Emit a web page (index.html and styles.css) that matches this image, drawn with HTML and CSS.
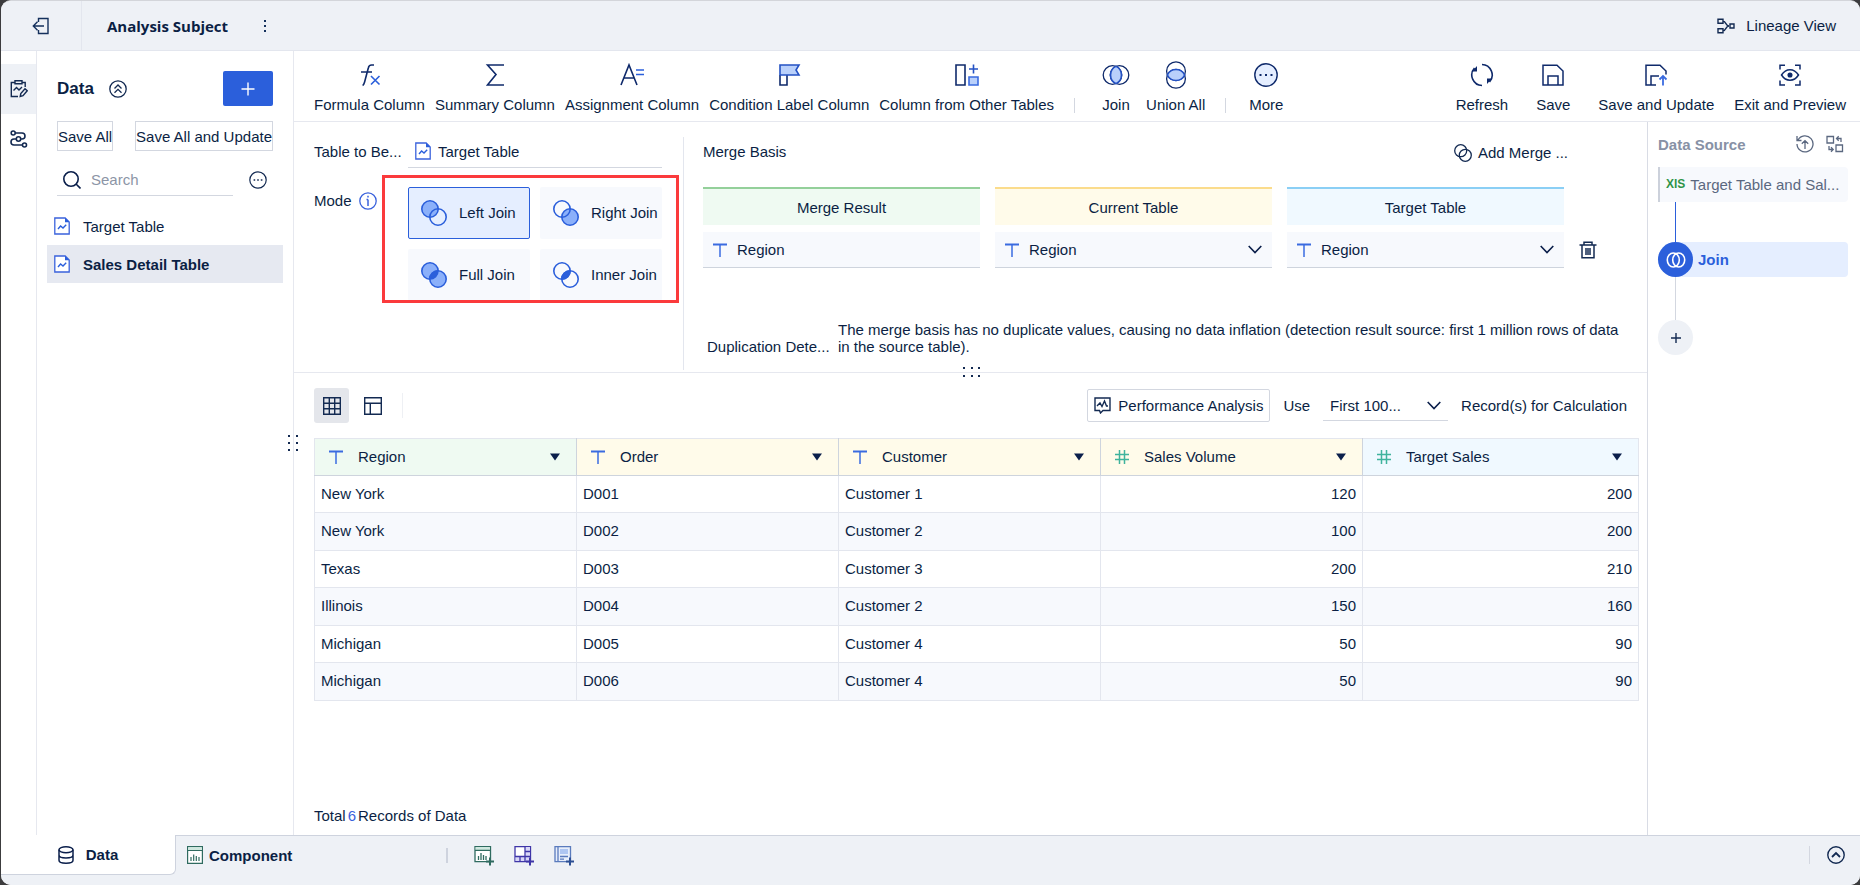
FILE: index.html
```html
<!DOCTYPE html>
<html lang="en">
<head>
    <meta charset="UTF-8">
    <meta name="viewport" content="width=device-width, initial-scale=1.0">
    <title>Analysis Subject</title>
    <link rel="stylesheet" href="styles.css">
</head>
<body>

<!-- Shared icons -->
<svg class="sprite" aria-hidden="true">
    <symbol id="icon-sheet" viewBox="0 0 16 18">
        <path d="M.8 1h10.4L15.2 5v12H.8z" fill="#fff" stroke="#3a62dc" stroke-width="1.3"/>
        <path d="M11 1v4.2h4.2z" fill="#2b5fdb"/>
        <path d="M4 12l2.6-3 2.4 2 3.2-3.2" fill="none" stroke="#2b5fdb" stroke-width="1.4"/>
    </symbol>
    <symbol id="icon-text" viewBox="0 0 14 14">
        <path d="M0 1.5h14" stroke="#3a6be0" stroke-width="2"/>
        <path d="M7 1.5V14" stroke="#3a6be0" stroke-width="1.5"/>
    </symbol>
    <symbol id="icon-number" viewBox="0 0 14 14">
        <path d="M4.5 0v14M9.5 0v14M0 4.5h14M0 9.5h14" stroke="#3fb39d" stroke-width="1.5"/>
    </symbol>
    <symbol id="icon-arrow" viewBox="0 0 10 8">
        <path d="M0 .5h10L5 7.5z" fill="#0b1f4b"/>
    </symbol>
    <symbol id="icon-more" viewBox="0 0 18 18">
        <circle cx="9" cy="9" r="8.2" fill="none" stroke="#132a52" stroke-width="1.2"/>
        <path d="M4.6 9h1.6M8.2 9h1.6M11.8 9h1.6" stroke="#132a52" stroke-width="1.6"/>
    </symbol>
</svg>

<div class="app">

    <!-- Header -->
    <header class="header">
        <button class="back" aria-label="Back">
            <svg width="18" height="18" viewBox="0 0 18 18" fill="none" stroke="#14305c" stroke-width="1.4"><path d="M6.5 5V1.5h9.5v15H6.5V13M12 9H1.5M5.5 4.8L1.3 9l4.2 4.2"/></svg>
        </button>
        <h1 class="title">Analysis Subject</h1>
        <button class="dots" aria-label="Subject menu">
            <svg width="4" height="12" viewBox="0 0 4 12" fill="#14305c"><path d="M1 0h2v2H1zM1 5h2v2H1zM1 10h2v2H1z"/></svg>
        </button>
        <button class="lineage">
            <svg width="18" height="16" viewBox="0 0 18 16" fill="none" stroke="#132a52" stroke-width="1.4"><path d="M1 1.2h5v4H1zM1 10.8h5v4H1zM13 6h4v4h-4zM6 3c3 0 2.5 5 6 5M6 13c3 0 2.5-5 6-5"/></svg>
            Lineage View
        </button>
    </header>

    <div class="body">

        <!-- Left rail -->
        <nav class="rail">
            <button class="rail-item active" aria-label="Edit">
                <svg width="18" height="18" viewBox="0 0 18 18" fill="none" stroke="#132a52" stroke-width="1.4"><path d="M5 2.5H1.3v14H8M12 2.5h3.2V7M5 .8h7v3H5zM3.5 10.5l3-3 2.5 2.5 3-3M10.2 16.500l.6-3 4.200-4.700 2.200 2-4.200 4.800z"/></svg>
            </button>
            <button class="rail-item" aria-label="Lineage">
                <svg width="18" height="18" viewBox="0 0 18 18" fill="none" stroke="#132a52" stroke-width="1.6"><circle cx="3.2" cy="3" r="2"/><circle cx="8.5" cy="9" r="2.2"/><circle cx="14.5" cy="15" r="2"/><path d="M5.2 3H12a3 3 0 0 1 0 6h-1.3M6.300 9H4a3 3 0 0 0 0 6h8.500"/></svg>
            </button>
        </nav>

        <!-- Data list -->
        <aside class="tables">
            <div class="tables-head">
                <h2>Data</h2>
                <button aria-label="Collapse">
                    <svg width="18" height="18" viewBox="0 0 18 18" fill="none" stroke="#132a52" stroke-width="1.3"><circle cx="9" cy="9" r="8.2"/><path d="M5.5 8.5L9 5l3.5 3.5M5.5 12.8L9 9.3l3.5 3.5"/></svg>
                </button>
                <button class="add" aria-label="Add">
                    <svg width="14" height="14" viewBox="0 0 14 14" stroke="#fff" stroke-width="1.4"><path d="M7 .5v13M.5 7h13"/></svg>
                </button>
            </div>
            <div class="tables-save">
                <button class="outline">Save All</button>
                <button class="outline">Save All and Update</button>
            </div>
            <div class="tables-search">
                <label class="search">
                    <svg width="18" height="18" viewBox="0 0 18 18" fill="none" stroke="#0b1f4b" stroke-width="1.6"><circle cx="8" cy="8" r="7.2"/><path d="M13 13l4.5 4.5"/></svg>
                    <input type="text" placeholder="Search" aria-label="Search">
                </label>
                <button aria-label="More options"><svg width="18" height="18"><use href="#icon-more"/></svg></button>
            </div>
            <ul class="table-list">
                <li><svg width="16" height="18"><use href="#icon-sheet"/></svg>Target Table</li>
                <li class="selected"><svg width="16" height="18"><use href="#icon-sheet"/></svg>Sales Detail Table</li>
            </ul>
        </aside>

        <div class="workspace">

            <!-- Toolbar -->
            <div class="toolbar">
                <button class="tool">
                    <svg width="24" height="26" viewBox="0 0 24 26" fill="none" stroke="#0f2a6b" stroke-width="1.6"><path d="M17 3h-2.5c-2 0-2.8 1-3.2 3L7.6 20c-.4 1.5-1 3-2 3.5M4 10h11"/><path d="M14 14l8.500 8.500M22.500 14L14 22.500" stroke="#2b5fdb"/></svg>
                    Formula Column
                </button>
                <button class="tool">
                    <svg width="24" height="26" viewBox="0 0 24 26" fill="none" stroke="#0f2a6b" stroke-width="1.6"><path d="M21 3H4.5l8.5 9.500L4.500 23H21"/></svg>
                    Summary Column
                </button>
                <button class="tool">
                    <svg width="24" height="26" viewBox="0 0 24 26" fill="none" stroke="#0f2a6b" stroke-width="1.6"><path d="M1 23L9 3l8 20M4 16h10.5"/><path d="M16 8h8M16 12.500h8" stroke="#2b5fdb"/></svg>
                    Assignment Column
                </button>
                <button class="tool">
                    <svg width="24" height="26" viewBox="0 0 24 26" fill="#fff" stroke-width="1.6"><path d="M3 13v10h7V13" stroke="#0f2a6b"/><path d="M3 3h19l-3 5 3 5H3z" fill="#b9d0fb" stroke="#2452c4"/></svg>
                    Condition Label Column
                </button>
                <button class="tool">
                    <svg width="24" height="26" viewBox="0 0 24 26" fill="#fff" stroke-width="1.6"><path d="M1 3h9v20H1z" stroke="#0f2a6b"/><path d="M14 15h9v8h-9z" fill="#b9d0fb" stroke="#3a6be0"/><path d="M18.5 2.5v9M14 7h9" stroke="#2452c4"/></svg>
                    Column from Other Tables
                </button>
                <span class="divider"></span>
                <button class="tool join">
                    <svg width="28" height="28" viewBox="0 0 28 28" fill="none" stroke="#0f2a6b" stroke-width="1.3"><circle cx="10.5" cy="14" r="9.3"/><circle cx="17.5" cy="14" r="9.3"/><path d="M14 5.4a9.5 9.5 0 0 1 0 17.2 9.5 9.5 0 0 1 0-17.2z" fill="#b9d0fb" stroke="#2452c4" stroke-width="1.6"/></svg>
                    Join
                </button>
                <button class="tool union">
                    <svg width="28" height="28" viewBox="0 0 28 28" fill="none" stroke="#0f2a6b" stroke-width="1.3"><circle cx="14" cy="10.200" r="9.400"/><circle cx="14" cy="17.800" r="9.400"/><path d="M5.4 14a9.500 9.500 0 0 1 17.200 0 9.500 9.500 0 0 1-17.200 0z" fill="#b9d0fb" stroke="#2452c4" stroke-width="1.6"/></svg>
                    Union All
                </button>
                <span class="divider"></span>
                <button class="tool more">
                    <svg width="26" height="26" viewBox="0 0 26 26"><circle cx="13" cy="13" r="11.2" fill="#e5eeff" stroke="#0f2a6b" stroke-width="1.4"/><path d="M6.5 12h2v2h-2zM12 12h2v2h-2zM17.5 12h2v2h-2z" fill="#0f2a6b"/></svg>
                    More
                </button>
                <div class="toolbar-right">
                    <button class="tool">
                        <svg width="24" height="26" viewBox="0 0 24 26" fill="none" stroke="#0f2a6b" stroke-width="1.6"><path d="M12 2.5a10.5 10.5 0 0 1 7.5 17.500M12 23.500A10.500 10.500 0 0 1 4.500 6"/><path d="M2 9.500L7 4v5.500zM17 16.500h5L17 22z" fill="#0f2a6b" stroke="none"/></svg>
                        Refresh
                    </button>
                    <button class="tool">
                        <svg width="24" height="26" viewBox="0 0 24 26" fill="none" stroke="#0f2a6b" stroke-width="1.5"><path d="M2 3.2h14L22 9v14H2zM7 23v-9h10v9"/></svg>
                        Save
                    </button>
                    <button class="tool">
                        <svg width="24" height="26" viewBox="0 0 24 26" fill="none" stroke="#0f2a6b" stroke-width="1.5"><path d="M12 23H2V3.2h14L22 9v3.500M7 23v-9h8"/><path d="M19 23.500v-9M15.500 17.500L19 14l3.500 3.500" stroke="#3a6be0" stroke-width="1.8"/></svg>
                        Save and Update
                    </button>
                    <button class="tool exit">
                        <svg width="24" height="26" viewBox="0 0 24 26" fill="none" stroke="#0f2a6b" stroke-width="1.5"><path d="M2 7.5V3.2h5M17 3.2h5v4.3M22 18.5V23h-5M7 23H2v-4.500M3.500 13c4.500-7 12.500-7 17 0-4.500 7-12.500 7-17 0z"/><circle cx="12" cy="13" r="1.8" fill="#0f2a6b"/></svg>
                        Exit and Preview
                    </button>
                </div>
            </div>

            <div class="content">
                <main class="main">

                    <!-- Join settings -->
                    <section class="settings">
                        <div class="join-mode">
                            <div class="field">
                                <span class="field-label">Table to Be...</span>
                                <div class="field-value"><svg width="16" height="18"><use href="#icon-sheet"/></svg>Target Table</div>
                            </div>
                            <div class="field modes-field">
                                <span class="field-label mode-label" id="modeLabel">Mode
                                    <svg width="18" height="18" viewBox="0 0 18 18" fill="none" stroke="#3a62dc" stroke-width="1.3"><circle cx="9" cy="9" r="8.2"/><path d="M9 7.5V14M7.5 7.5H9M9 3.8v1.8" stroke-width="1.5"/></svg>
                                </span>
                                <div class="modes" role="radiogroup" aria-labelledby="modeLabel">
                                    <label class="mode">
                                        <input type="radio" name="mode" value="left" checked>
                                        <svg width="26" height="26" viewBox="0 0 26 26" fill="none" stroke="#2b5fdb" stroke-width="1.6"><circle cx="9" cy="9" r="8.2" fill="#8bb0fa"/><circle cx="17" cy="17" r="8.2"/></svg>
                                        Left Join
                                    </label>
                                    <label class="mode">
                                        <input type="radio" name="mode" value="right">
                                        <svg width="26" height="26" viewBox="0 0 26 26" fill="none" stroke="#2b5fdb" stroke-width="1.6"><circle cx="17" cy="17" r="8.2" fill="#8bb0fa"/><circle cx="9" cy="9" r="8.2"/></svg>
                                        Right Join
                                    </label>
                                    <label class="mode">
                                        <input type="radio" name="mode" value="full">
                                        <svg width="26" height="26" viewBox="0 0 26 26" fill="#8bb0fa" stroke="#2b5fdb" stroke-width="1.6"><circle cx="9" cy="9" r="8.2"/><circle cx="17" cy="17" r="8.2"/><path d="M17 8.8a8.2 8.2 0 0 1-8.2 8.2A8.2 8.2 0 0 1 17 8.8z" fill="#2b5fdb"/></svg>
                                        Full Join
                                    </label>
                                    <label class="mode">
                                        <input type="radio" name="mode" value="inner">
                                        <svg width="26" height="26" viewBox="0 0 26 26" fill="none" stroke="#2b5fdb" stroke-width="1.6"><circle cx="9" cy="9" r="8.2"/><circle cx="17" cy="17" r="8.2"/><path d="M17 8.8a8.2 8.2 0 0 1-8.2 8.2A8.2 8.2 0 0 1 17 8.8z" fill="#2b5fdb"/></svg>
                                        Inner Join
                                    </label>
                                    <div class="highlight"></div>
                                </div>
                            </div>
                        </div>

                        <div class="basis">
                            <div class="basis-head">
                                <span>Merge Basis</span>
                                <button class="add-merge">
                                    <svg width="18" height="18" viewBox="0 0 18 18" fill="none" stroke="#132a52" stroke-width="1.3"><circle cx="6.7" cy="6.7" r="6"/><circle cx="11.3" cy="11.3" r="6"/></svg>
                                    Add Merge ...
                                </button>
                            </div>
                            <div class="basis-grid">
                                <div class="basis-title green">Merge Result</div>
                                <div class="basis-title yellow">Current Table</div>
                                <div class="basis-title blue">Target Table</div>
                                <div></div>
                                <div class="basis-field"><svg width="14" height="14"><use href="#icon-text"/></svg>Region</div>
                                <div class="basis-field">
                                    <svg width="14" height="14"><use href="#icon-text"/></svg>
                                    <select class="dropdown" aria-label="Current table field"><option>Region</option></select>
                                </div>
                                <div class="basis-field">
                                    <svg width="14" height="14"><use href="#icon-text"/></svg>
                                    <select class="dropdown" aria-label="Target table field"><option>Region</option></select>
                                </div>
                                <button class="trash" aria-label="Delete">
                                    <svg width="18" height="18" viewBox="0 0 18 18" fill="none" stroke="#132a52" stroke-width="1.5"><path d="M.5 4h17M5 4V1.2h8V4M3 4v12.8h12V4M7 7v7M9 7v7M11 7v7"/></svg>
                                </button>
                            </div>
                            <div class="duplication">
                                <span class="duplication-label">Duplication Dete...</span>
                                <p>The merge basis has no duplicate values, causing no data inflation (detection result source: first 1 million rows of data in the source table).</p>
                            </div>
                        </div>
                        <svg class="drag-x" width="18" height="12" viewBox="0 0 18 12" fill="#132a52"><path d="M0 1h2v2H0zM8 1h2v2H8zM15 1h2v2h-2zM0 9h2v2H0zM8 9h2v2H8zM15 9h2v2h-2z"/></svg>
                    </section>

                    <!-- Preview table -->
                    <section class="preview">
                        <svg class="drag-y" width="12" height="18" viewBox="0 0 12 18" fill="#132a52"><path d="M1 1h2v2H1zM1 8h2v2H1zM1 15h2v2H1zM9 1h2v2H9zM9 8h2v2H9zM9 15h2v2H9z"/></svg>
                        <div class="preview-bar">
                            <button class="view active" aria-label="Table view">
                                <svg width="18" height="18" viewBox="0 0 18 18" fill="none" stroke="#132a52" stroke-width="1.4"><path d="M.7.7h16.6v16.6H.7zM6.3.7v16.6M11.7.7v16.6M.7 6.3h16.6M.7 11.7h16.6"/></svg>
                            </button>
                            <button class="view" aria-label="Layout view">
                                <svg width="18" height="18" viewBox="0 0 18 18" fill="none" stroke="#132a52" stroke-width="1.4"><path d="M.7.7h16.6v16.6H.7zM.7 6.3h16.6M6.3 6.3v11"/></svg>
                            </button>
                            <span class="view-divider"></span>
                            <div class="preview-options">
                                <button class="outline performance">
                                    <svg width="17" height="17" viewBox="0 0 17 17" fill="none" stroke="#132a52" stroke-width="1.4"><path d="M1 1h15v12.5H9L6.5 16l-1-2.5H1zM3 9l3-3 2 3.5L10.5 4l2 5H14"/></svg>
                                    Performance Analysis
                                </button>
                                <label for="records">Use</label>
                                <select class="dropdown records" id="records"><option>First 100...</option></select>
                                <span>Record(s) for Calculation</span>
                            </div>
                        </div>

                        <table class="data">
                            <thead>
                                <tr>
                                    <th class="green"><div class="col"><svg width="14" height="14"><use href="#icon-text"/></svg>Region<svg class="arrow" width="10" height="8"><use href="#icon-arrow"/></svg></div></th>
                                    <th class="yellow"><div class="col"><svg width="14" height="14"><use href="#icon-text"/></svg>Order<svg class="arrow" width="10" height="8"><use href="#icon-arrow"/></svg></div></th>
                                    <th class="yellow"><div class="col"><svg width="14" height="14"><use href="#icon-text"/></svg>Customer<svg class="arrow" width="10" height="8"><use href="#icon-arrow"/></svg></div></th>
                                    <th class="yellow"><div class="col"><svg width="14" height="14"><use href="#icon-number"/></svg>Sales Volume<svg class="arrow" width="10" height="8"><use href="#icon-arrow"/></svg></div></th>
                                    <th class="blue"><div class="col"><svg width="14" height="14"><use href="#icon-number"/></svg>Target Sales<svg class="arrow" width="10" height="8"><use href="#icon-arrow"/></svg></div></th>
                                </tr>
                            </thead>
                            <tbody>
                                <tr><td>New York</td><td>D001</td><td>Customer 1</td><td class="num">120</td><td class="num">200</td></tr>
                                <tr><td>New York</td><td>D002</td><td>Customer 2</td><td class="num">100</td><td class="num">200</td></tr>
                                <tr><td>Texas</td><td>D003</td><td>Customer 3</td><td class="num">200</td><td class="num">210</td></tr>
                                <tr><td>Illinois</td><td>D004</td><td>Customer 2</td><td class="num">150</td><td class="num">160</td></tr>
                                <tr><td>Michigan</td><td>D005</td><td>Customer 4</td><td class="num">50</td><td class="num">90</td></tr>
                                <tr><td>Michigan</td><td>D006</td><td>Customer 4</td><td class="num">50</td><td class="num">90</td></tr>
                            </tbody>
                        </table>

                        <p class="total"><span>Total</span><b>6</b><span>Records of Data</span></p>
                    </section>
                </main>

                <!-- Steps -->
                <aside class="steps">
                    <div class="steps-head">
                        <h3>Data Source</h3>
                        <button aria-label="Restore">
                            <svg width="18" height="18" viewBox="0 0 18 18" fill="none" stroke="#5b6880" stroke-width="1.3"><path d="M2 5a8 8 0 1 1-1 4M1 1v4.5h4.5M9 14V6M5.8 8.8L9 5.6l3.2 3.2"/></svg>
                        </button>
                        <button aria-label="Swap source">
                            <svg width="18" height="18" viewBox="0 0 18 18" fill="none" stroke="#5b6880" stroke-width="1.3"><path d="M1 1.5h6.500v6.500H1zM10 10h6.500v6.500H10zM15 7V3.500h-4M12.700 1.200l-2.200 2.300 2.200 2.300M3 11v3.500h4M5 12.200l2.200 2.300L5 16.800"/></svg>
                        </button>
                    </div>
                    <div class="source"><span class="xls">XlS</span>Target Table and Sal...</div>
                    <span class="line blue-line"></span>
                    <button class="step">
                        <span class="circle"><svg width="20" height="20" viewBox="0 0 20 20" fill="none" stroke="#fff" stroke-width="1.6"><ellipse cx="7.3" cy="10" rx="6" ry="7"/><ellipse cx="12.7" cy="10" rx="6" ry="7"/></svg></span>
                        Join
                    </button>
                    <span class="line"></span>
                    <button class="circle plus" aria-label="Add step">
                        <svg width="10" height="10" viewBox="0 0 10 10" stroke="#132a52" stroke-width="1.4"><path d="M5 0v10M0 5h10"/></svg>
                    </button>
                </aside>
            </div>
        </div>
    </div>

    <!-- Bottom tabs -->
    <footer class="footer">
        <button class="tab active">
            <svg width="16" height="18" viewBox="0 0 16 18" fill="none" stroke="#0b1f4b" stroke-width="1.5"><ellipse cx="8" cy="3.8" rx="7" ry="3"/><path d="M1 3.8v10.4c0 4 14 4 14 0V3.8M1 9c0 4 14 4 14 0"/></svg>
            Data
        </button>
        <button class="tab component">
            <svg width="16" height="18" viewBox="0 0 16 18" fill="none" stroke="#2f6b60" stroke-width="1.2"><path d="M.6.6h14.800v16.800H.6z" fill="#fff"/><path d="M1.200 1.200h13.600v3H1.200z" fill="#cfe8df" stroke="none"/><path d="M.6 4.500h14.800M4 15v-4M6.700 15V8.500M9.300 15v-5M12 15v-4"/></svg>
            Component
        </button>
        <span class="footer-divider"></span>
        <div class="footer-add">
            <button aria-label="Add component">
                <svg width="20" height="22" viewBox="0 0 20 22" fill="none" stroke="#2f6b60" stroke-width="1.3"><path d="M1 2.600h15.500v15H1z" fill="#fff"/><path d="M1.600 3h14.200v3H1.600z" fill="#cfe8df" stroke="none"/><path d="M1 6.300h15.500M4.500 16v-4M7 16V9M9.500 16v-5M12 16v-4"/><path d="M16 13.500v8M12 17.500h8" stroke-width="2"/></svg>
            </button>
            <button aria-label="Add dashboard">
                <svg width="20" height="22" viewBox="0 0 20 22" fill="none" stroke="#3f36a8" stroke-width="1.300"><path d="M1 2.600h15.500v15H1z" fill="#fff"/><path d="M11.500 3h4.500v10h-4.500zM1.600 13H16v4H1.600z" fill="#d9d7f7" stroke="none"/><path d="M11 2.600v15M1 12.500h15.500M11 7.500h5.500M6 12.500v5"/><path d="M16 13.500v8M12 17.500h8" stroke-width="2"/></svg>
            </button>
            <button aria-label="Add report">
                <svg width="20" height="22" viewBox="0 0 20 22" fill="none" stroke="#5a7bbd" stroke-width="1.300"><path d="M1 2.600h15.500v15H1z" fill="#e7eefb"/><path d="M6 5h8v5H6z" fill="#aec6f2" stroke="none"/><path d="M4 2.600v15M6 12.500h8M6 15.200h4"/><path d="M16 13.500v8M12 17.500h8" stroke="#2c4f94" stroke-width="2"/></svg>
            </button>
        </div>
        <button class="expand" aria-label="Expand">
            <svg width="18" height="18" viewBox="0 0 18 18" fill="none" stroke="#132a52" stroke-width="1.4"><circle cx="9" cy="9" r="8.200"/><path d="M5 11l4-4 4 4" stroke-width="1.800"/></svg>
        </button>
    </footer>
</div>

</body>
</html>
```
FILE: styles.css
```css
* {
    box-sizing: border-box;
}
html {
    background: #3c3c3e;
}
body {
    margin: 0;
    font-family: "Liberation Sans", Arial, sans-serif;
    font-size: 15px;
    line-height: 17px;
    color: #0b1f44;
}
h1, h2, h3, p, ul {
    margin: 0;
    padding: 0;
}
button {
    display: flex;
    align-items: center;
    justify-content: center;
    padding: 0;
    border: 0;
    background: none;
    font: inherit;
    color: inherit;
    white-space: nowrap;
    cursor: pointer;
}
svg {
    display: block;
    flex: none;
}
.sprite {
    position: absolute;
    width: 0;
    height: 0;
}
.app {
    display: flex;
    flex-direction: column;
    min-height: 100vh;
    margin-left: 1px;
    border-top: 1px solid #d3d5da;
    border-radius: 10px;
    background: #fff;
    overflow: hidden;
}
.green {
    background: #effaf2;
}
.yellow {
    background: #fffbea;
}
.blue {
    background: #f0f9ff;
}

/* Header */
.header {
    display: flex;
    align-items: center;
    height: 50px;
    padding-right: 24px;
    border-bottom: 1px solid #e3e6ee;
    background: #eef1f6;
}
.back {
    width: 81px;
    height: 100%;
    border-right: 1px solid #e3e6ee;
}
.title {
    margin-left: 25px;
    font-family: "Open Sans", "Noto Sans", sans-serif;
    font-size: 15px;
    font-weight: 700;
    line-height: 20px;
}
.dots {
    width: 20px;
    height: 24px;
    margin-left: 27px;
}
.lineage {
    gap: 11px;
    margin-left: auto;
}

/* Left side */
.body {
    display: flex;
    flex: 1;
}
.rail {
    width: 36px;
    padding-top: 13px;
    border-right: 1px solid #e6e8ef;
}
.rail-item {
    width: 100%;
    height: 50px;
}
.rail-item.active {
    background: #eef1f6;
}
.tables {
    width: 257px;
    padding: 20px 10px;
    border-right: 1px solid #e6e8ef;
}
.tables-head {
    display: flex;
    align-items: center;
    gap: 15px;
    padding: 0 10px;
}
.tables-head h2 {
    font-size: 17px;
    line-height: 20px;
}
.add {
    width: 50px;
    height: 35px;
    margin-left: auto;
    border-radius: 2px;
    background: #2b5fdb;
}
.outline {
    height: 30px;
    border: 1px solid #d3d7e0;
    background: #fff;
}
.tables-save {
    display: flex;
    justify-content: space-between;
    padding: 15px 10px 0;
}
.tables-search {
    display: flex;
    align-items: center;
    justify-content: space-between;
    padding: 13px 16px 11px 10px;
}
.search {
    display: flex;
    align-items: center;
    gap: 10px;
    width: 176px;
    height: 32px;
    padding-left: 6px;
    border-bottom: 1px solid #d3d7e0;
}
.search input {
    width: 100%;
    min-width: 0;
    padding: 0;
    border: 0;
    outline: 0;
    font: inherit;
    color: inherit;
}
.search input::placeholder {
    color: #8c95a6;
}
.table-list {
    list-style: none;
}
.table-list li {
    display: flex;
    align-items: center;
    gap: 13px;
    height: 38px;
    padding-left: 7px;
}
.table-list .selected {
    background: #e6e9f1;
    font-weight: bold;
}

/* Toolbar */
.workspace {
    display: flex;
    flex: 1;
    flex-direction: column;
    min-width: 0;
}
.toolbar {
    display: flex;
    align-items: flex-end;
    height: 71px;
    padding: 0 14px 8px 20px;
    border-bottom: 1px solid #e6e8ef;
}
.tool {
    flex-direction: column;
    justify-content: flex-end;
    gap: 8px;
    margin-right: 10px;
}
.divider {
    width: 1px;
    height: 15px;
    margin: 0 27px 0 10px;
    background: #d3d7e0;
}
.tool.join {
    gap: 7px;
    margin-right: 16px;
}
.tool.union {
    gap: 7px;
}
.union + .divider {
    margin: 0 23px 0 10px;
}
.toolbar-right {
    display: flex;
    gap: 28px;
    margin-left: auto;
}
.toolbar-right .tool {
    margin: 0;
}
.toolbar-right .exit {
    margin-left: -8px;
}

/* Join settings */
.content {
    display: flex;
    flex: 1;
}
.main {
    display: flex;
    flex: 1;
    flex-direction: column;
    min-width: 0;
}
.settings {
    position: relative;
    display: flex;
    height: 251px;
    padding: 15px 0 2px 20px;
    border-bottom: 1px solid #e6e8ef;
}
.join-mode {
    width: 370px;
    border-right: 1px solid #e3e6ee;
}
.field {
    display: flex;
}
.field-label {
    width: 94px;
    line-height: 30px;
    white-space: nowrap;
}
.field-value {
    display: flex;
    align-items: center;
    gap: 7px;
    width: 254px;
    height: 31px;
    padding: 0 0 2px 7px;
    border-bottom: 1px solid #d3d7e0;
}
.modes-field {
    margin-top: 19px;
}
.mode-label {
    display: flex;
    align-items: center;
    gap: 7px;
    height: 28px;
}
.modes {
    position: relative;
    display: grid;
    grid-template-columns: 122px 122px;
    gap: 10px;
}
.mode {
    display: flex;
    align-items: center;
    gap: 12px;
    height: 52px;
    padding: 0 0 1px 12px;
    border: 1px solid transparent;
    border-radius: 2px;
    background: #f7f9fd;
    white-space: nowrap;
    cursor: pointer;
}
.mode input {
    position: absolute;
    opacity: 0;
}
.mode:has(input:checked) {
    border-color: #2b5fdb;
    background: #e5eeff;
}
.highlight {
    position: absolute;
    inset: -12px -17px -2px -26px;
    border: 3px solid #fb3a3c;
    pointer-events: none;
}
.basis {
    flex: 1;
    padding-left: 19px;
}
.basis-head {
    display: flex;
    justify-content: space-between;
    height: 31px;
    padding-right: 79px;
    line-height: 30px;
}
.add-merge {
    gap: 6px;
}
.basis-grid {
    display: grid;
    grid-template-columns: repeat(3, 1fr) 32px;
    gap: 7px 15px;
    margin-top: 19px;
    padding-right: 36px;
}
.basis-title {
    height: 38px;
    border-top: 2px solid;
    line-height: 38px;
    text-align: center;
}
.basis-title.green {
    border-top-color: #94d09a;
}
.basis-title.yellow {
    border-top-color: #fbdc8c;
}
.basis-title.blue {
    border-top-color: #8bcff5;
}
.basis-field {
    display: flex;
    align-items: center;
    gap: 10px;
    height: 36px;
    padding: 0 10px;
    border-bottom: 1px solid #ced4dd;
    background: #f7f9fd;
}
.dropdown {
    flex: 1;
    height: 30px;
    padding: 0;
    border: 0;
    outline: 0;
    appearance: none;
    background: url("data:image/svg+xml,%3Csvg xmlns='http://www.w3.org/2000/svg' width='14' height='9' fill='none' stroke='%230b1f4b' stroke-width='1.6'%3E%3Cpath d='M.7 1L7 7.5 13.3 1'/%3E%3C/svg%3E") right center no-repeat;
    font: inherit;
    color: inherit;
}
.trash {
    justify-content: flex-start;
}
.duplication {
    display: flex;
    align-items: flex-end;
    margin-top: 53px;
    padding: 0 24px 0 4px;
}
.duplication-label {
    width: 131px;
    white-space: nowrap;
}
.duplication p {
    flex: 1;
}
.drag-x {
    position: absolute;
    bottom: -6px;
    left: calc(50% - 8px);
}

/* Preview table */
.preview {
    position: relative;
    display: flex;
    flex: 1;
    flex-direction: column;
    padding: 15px 8px 11px 20px;
}
.drag-y {
    position: absolute;
    top: 61px;
    left: -7px;
}
.preview-bar {
    display: flex;
    align-items: center;
    height: 35px;
    margin-bottom: 15px;
}
.view {
    width: 35px;
    height: 35px;
    margin-right: 6px;
    border-radius: 3px;
}
.view.active {
    background: #e4e6eb;
}
.view-divider {
    width: 1px;
    height: 25px;
    margin-left: 6px;
    background: #eef0f4;
}
.preview-options {
    display: flex;
    align-items: center;
    gap: 13px;
    margin-left: auto;
    padding-right: 12px;
}
.performance {
    gap: 7px;
    height: 33px;
    padding: 0 6px;
    border-radius: 2px;
}
.records {
    flex: none;
    width: 125px;
    padding: 0 7px;
    border-bottom: 1px solid #d3d7e0;
    background-position: right 7px center;
}
.data {
    width: 100%;
    border-collapse: collapse;
    table-layout: fixed;
}
.data th {
    width: 262px;
    height: 37px;
    padding: 0 0 1px;
    border: 1px solid #ced4dd;
    border-top-color: #e3e6ee;
    font-weight: normal;
    text-align: left;
}
.data th:first-child {
    border-left-color: #e3e6ee;
}
.data th:last-child {
    width: auto;
    border-right-color: #e3e6ee;
}
.col {
    display: flex;
    align-items: center;
    padding: 0 16px 0 14px;
}
.col svg:first-child {
    margin-right: 15px;
}
.data .arrow {
    margin-left: auto;
}
.data td {
    height: 37px;
    padding: 0 6px 2px;
    border: 1px solid #e3e6ee;
}
.data tbody tr:nth-child(even) td {
    height: 38px;
    background: #f7f9fd;
}
.data .num {
    text-align: right;
}
.total {
    display: flex;
    gap: 2px;
    margin-top: auto;
}
.total b {
    font-weight: normal;
    color: #3a62dc;
}

/* Steps */
.steps {
    width: 213px;
    padding: 12px 12px 0 10px;
    border-left: 1px solid #d9dce5;
}
.steps-head {
    display: flex;
    align-items: center;
    gap: 12px;
    height: 20px;
    padding-right: 4px;
}
.steps-head h3 {
    flex: 1;
    font-size: 15px;
    color: #8791a5;
}
.source {
    display: flex;
    align-items: center;
    gap: 5px;
    height: 35px;
    margin-top: 13px;
    padding: 0 6px;
    border-left: 2px solid #ccd1db;
    border-radius: 0 4px 4px 0;
    background: #f7f9fd;
    color: #5b6880;
    white-space: nowrap;
}
.xls {
    font-size: 12px;
    font-weight: bold;
    color: #2f9448;
}
.line {
    display: block;
    width: 1px;
    height: 43px;
    margin-left: 17px;
    background: #d3d7e0;
}
.blue-line {
    height: 40px;
    background: #2b5fdb;
}
.step {
    justify-content: flex-start;
    gap: 5px;
    width: 100%;
    border-radius: 18px 4px 4px 18px;
    background: #e5eeff;
    font-weight: bold;
    color: #2b5fdb;
}
.circle {
    display: flex;
    align-items: center;
    justify-content: center;
    width: 35px;
    height: 35px;
    border-radius: 50%;
    background: #2b5fdb;
}
.circle.plus {
    background: #eef1f6;
}

/* Bottom tabs */
.footer {
    display: flex;
    align-items: center;
    height: 50px;
    padding-bottom: 10px;
    background: #eef1f6;
    box-shadow: inset 0 1px #ced3de;
}
.tab {
    gap: 12px;
    height: 40px;
    font-weight: bold;
}
.tab.active {
    width: 175px;
    border: solid #ced3de;
    border-width: 0 1px 1px 0;
    border-radius: 0 0 6px 0;
    background: #fff;
}
.component {
    gap: 6px;
    margin-left: 11px;
}
.footer-divider {
    width: 2px;
    height: 15px;
    margin: 0 26px 0 154px;
    background: #ced3de;
}
.footer-add {
    display: flex;
    gap: 20px;
}
.expand {
    height: 18px;
    margin-left: auto;
    padding: 0 15px 0 17px;
    border-left: 1px solid #d3d7e0;
}
```
